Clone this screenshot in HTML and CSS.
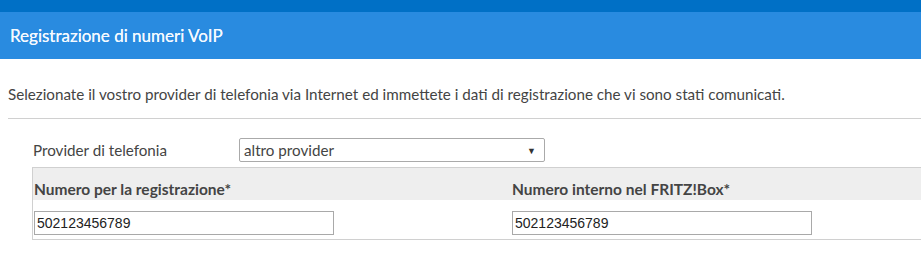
FILE: index.html
```html
<!DOCTYPE html>
<html lang="it">
<head>
    <meta charset="UTF-8">
    <title>Registrazione di numeri VoIP</title>
    <link rel="stylesheet" href="styles.css">
</head>
<body>
    <div class="topbar"></div>
    <div class="titlebar">
        <h1>Registrazione di numeri VoIP</h1>
    </div>
    <div class="content">
        <p class="intro">Selezionate il vostro provider di telefonia via Internet ed immettete i dati di registrazione che vi sono stati comunicati.</p>
        <div class="form">
            <div class="provider-row">
                <label for="provider">Provider di telefonia</label>
                <div class="select">
                    <span>altro provider</span>
                    <span class="arrow">&#9660;</span>
                </div>
            </div>
            <div class="table">
                <div class="table-head">
                    <div class="col col-left">Numero per la registrazione*</div>
                    <div class="col col-right">Numero interno nel FRITZ!Box*</div>
                </div>
                <div class="table-row">
                    <div class="col col-left"><input type="text" value="502123456789"></div>
                    <div class="col col-right"><input type="text" value="502123456789"></div>
                </div>
            </div>
        </div>
    </div>
</body>
</html>
```

FILE: styles.css
```css
body {
    margin: 0;
    font-family: Lato, "Open Sans", sans-serif;
    color: #444;
    background: #fff;
}
.topbar {
    height: 12px;
    background-color: #0070c6;
}
.titlebar {
    height: 47px;
    background-color: #298be0;
    display: flex;
    align-items: center;
    padding-left: 10px;
}
.titlebar h1 {
    margin: 0;
    font-size: 17px;
    font-weight: normal;
    color: #f4f9ff;
    text-shadow: 0 0 0.4px #f4f9ff;
}
.content {
    padding: 0 0 0 8px;
}
.intro {
    margin: 0;
    padding: 24px 0 13px 0;
    font-size: 15.2px;
    line-height: 22px;
    border-bottom: 1px solid #d0d0d0;
}
.form {
    padding: 19px 0 0 24px;
}
.provider-row {
    display: flex;
    align-items: center;
    height: 24px;
    font-size: 15.2px;
}
.provider-row label {
    width: 206px;
    padding-left: 1px;
}
.select {
    width: 292px;
    height: 22px;
    border: 1px solid #aaa;
    border-radius: 2px;
    display: flex;
    align-items: center;
    justify-content: space-between;
    padding: 0 8px 0 4px;
}
.arrow {
    font-size: 9px;
    color: #333;
}
.table {
    margin-top: 5px;
    border-left: 1px solid #d0d0d0;
    border-top: 1px solid #d0d0d0;
    border-bottom: 1px solid #d0d0d0;
}
.table-head {
    display: flex;
    height: 32px;
    align-items: center;
    background: #eeeeee;
    font-size: 15.5px;
    font-weight: bold;
    padding-top: 10px;
    box-sizing: border-box;
}
.table-row {
    display: flex;
    padding: 11px 0 4px 0;
}
.col-left {
    width: 478px;
    padding-left: 1px;
}
.col-right {
    flex: 1;
}
.table-row input {
    width: 300px;
    height: 24px;
    box-sizing: border-box;
    margin: 0;
    border: 1px solid #a9a9a9;
    padding: 0 2px;
    font-family: "Liberation Sans", Arial, sans-serif;
    font-size: 14px;
    color: #222;
}
```
